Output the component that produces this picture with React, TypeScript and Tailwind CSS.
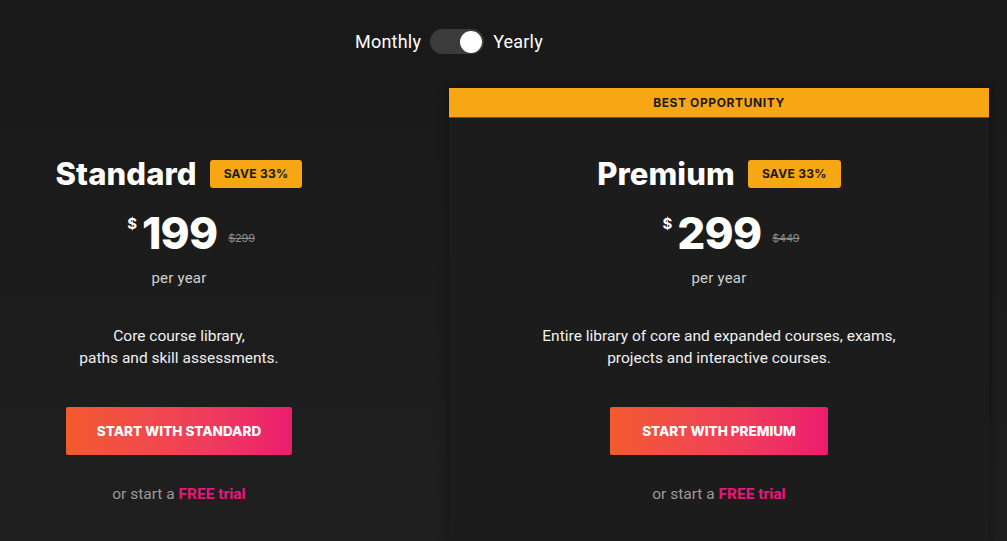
import { useState } from "react"

const plans = [
	{
		name: "Standard",
		price: "199",
		oldPrice: "$299",
		desc: ["Core course library,", "paths and skill assessments."],
		cta: "START WITH STANDARD",
		featured: false,
	},
	{
		name: "Premium",
		price: "299",
		oldPrice: "$449",
		desc: ["Entire library of core and expanded courses, exams,", "projects and interactive courses."],
		cta: "START WITH PREMIUM",
		featured: true,
	},
]

function PlanBody({ plan }: { plan: (typeof plans)[number] }) {
	return (
		<div className="flex flex-col items-center pt-[36px]">
			<div className="flex items-center gap-[13px]">
				<h2 className="font-['Inter'] text-[31px] leading-[40px] font-extrabold tracking-[0.1px] text-white">
					{plan.name}
				</h2>
				<span className="rounded-[3px] bg-[#f7a614] px-[14px] py-[6px] font-['Inter'] text-[12px] leading-[16px] font-bold tracking-[0.3px] text-[#1a1a1a]">
					SAVE 33%
				</span>
			</div>
			<div className="mt-[14px] ml-[24px] flex items-start">
				<span className="mt-[5px] mr-[5px] font-['Inter'] text-[15px] font-bold text-white">$</span>
				<span className="font-['Inter'] text-[44px] leading-[50px] font-extrabold tracking-[-0.8px] text-white">
					{plan.price}
				</span>
				<span className="mt-[22px] ml-[11px] font-['Inter'] text-[11px] tracking-[-0.2px] text-[#8d8d8d] line-through">
					{plan.oldPrice}
				</span>
			</div>
			<p className="mt-[10px] font-['Roboto'] text-[15px] leading-[20px] tracking-[0.2px] text-[#d0d0d0]">per year</p>
			<p className="mt-[37px] text-center font-['Roboto'] text-[15.5px] leading-[22px] text-[#f0f0f0]">
				{plan.desc[0]}
				<br />
				{plan.desc[1]}
			</p>
			<button
				className={`mt-[38px] h-[48px] rounded-[2px] bg-gradient-to-r from-[#f35a2c] to-[#ec1b6e] font-['Inter'] text-[13.5px] font-extrabold text-white ${
					plan.featured ? "w-[218px]" : "w-[226px]"
				}`}
			>
				{plan.cta}
			</button>
			<p className="mt-[28px] font-['Roboto'] text-[15.5px] text-[#9a9a9a]">
				or start a <span className="font-bold text-[#e8177c]">FREE trial</span>
			</p>
		</div>
	)
}

export default function App() {
	const [yearly, setYearly] = useState(true)

	return (
		<div className="flex h-[541px] w-full flex-col overflow-hidden bg-gradient-to-b from-[#191919] to-[#1f1f1f]">
			<div className="flex w-[898px] items-center justify-center gap-[9px] pt-[28px] font-['Roboto'] text-[18px] tracking-[0.2px] text-white">
				<span>Monthly</span>
				<button
					onClick={() => setYearly(!yearly)}
					className={`flex h-[25px] w-[54px] items-center rounded-full bg-[#3b3b3b] px-[2px] ${
						yearly ? "justify-end" : "justify-start"
					}`}
				>
					<span className="h-[22px] w-[22px] rounded-full bg-white" />
				</button>
				<span>Yearly</span>
			</div>

			<div className="mt-[33px] flex flex-1 items-stretch">
				<div className="w-[358px] pt-[30px]">
					<PlanBody plan={plans[0]} />
				</div>
				<div className="ml-[91px] flex w-[540px] flex-col bg-[#1c1c1c] shadow-[0_0_10px_rgba(0,0,0,0.45)]">
					<div className="flex h-[30px] items-center justify-center border-b border-[#7a5210] bg-[#f7a614] font-['Inter'] text-[12px] font-bold tracking-[0.6px] text-[#1a1a1a]">
						BEST OPPORTUNITY
					</div>
					<PlanBody plan={plans[1]} />
				</div>
			</div>
		</div>
	)
}
